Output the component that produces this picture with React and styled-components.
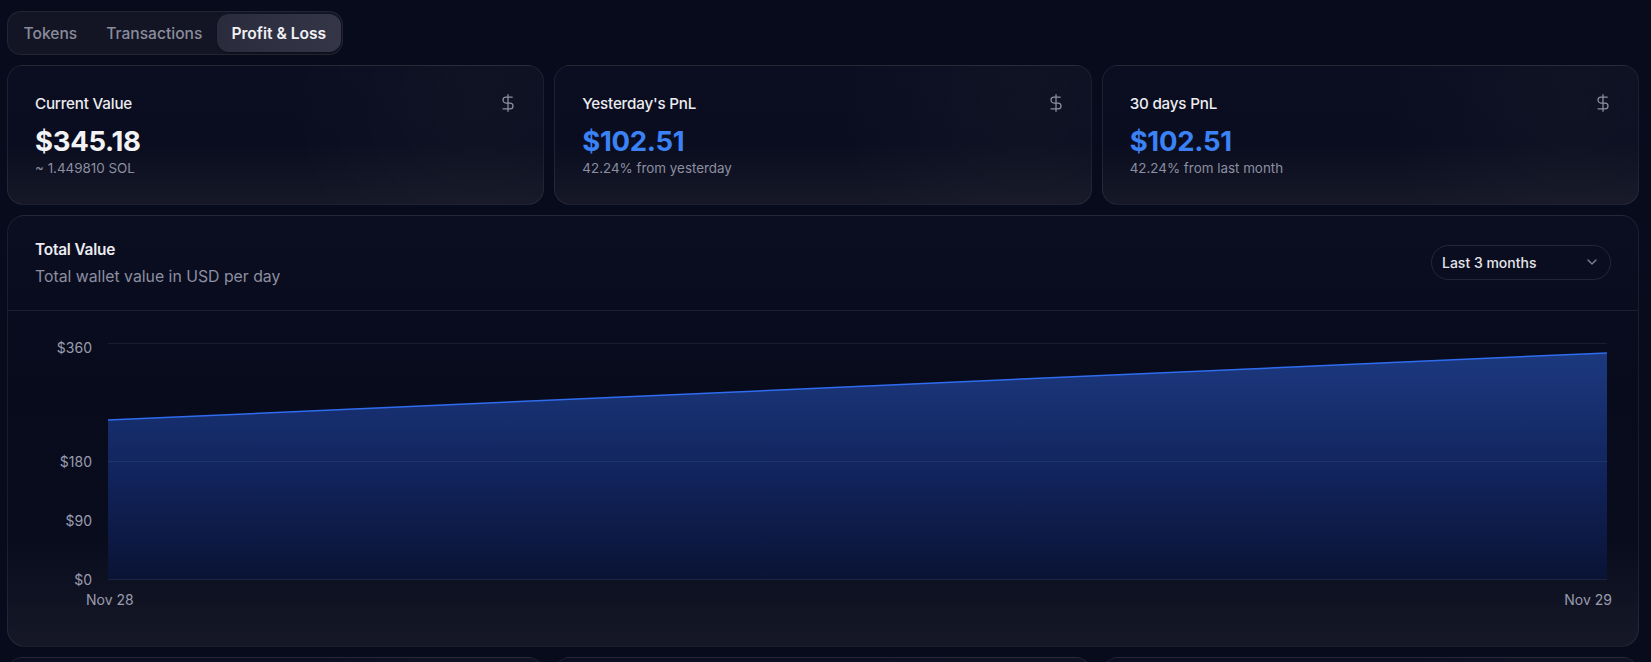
import React, { useState } from "react";
import styled, { createGlobalStyle } from "styled-components";
import { DollarSign, ChevronDown } from "lucide-react";

//global page styles
const GlobalStyle = createGlobalStyle`
    * { box-sizing: border-box; }
    body {
        margin: 0;
        background: #080b1b;
        font-family: Inter, "Noto Sans", "Liberation Sans", sans-serif;
        color: #ececf1;
    }
`

//chart data (value at first and last day)
const PLOT_HEIGHT = 237;
const MAX = 360;
const points = [243, 345];
const yTicks = [
    { label: "$360", top: 5 },
    { label: "$180", top: 118.5 },
    { label: "$90", top: 178 },
    { label: "$0", top: 237 },
];

const toY = v => PLOT_HEIGHT * (1 - v / MAX);

const statCards = [
    { title: "Current Value", value: "$345.18", sub: "~ 1.449810 SOL", accent: false },
    { title: "Yesterday's PnL", value: "$102.51", sub: "42.24% from yesterday", accent: true },
    { title: "30 days PnL", value: "$102.51", sub: "42.24% from last month", accent: true },
];

const tabs = ["Tokens", "Transactions", "Profit & Loss"];

const StatCard = ({ title, value, sub, accent }) => (
    <Card>
        <CardTop>
            <CardTitle>{title}</CardTitle>
            <IconWrap><DollarSign size={20} strokeWidth={1.5} /></IconWrap>
        </CardTop>
        <Value $accent={accent}>{value}</Value>
        <Sub>{sub}</Sub>
    </Card>
)

const App = () => {
    const [active, setActive] = useState("Profit & Loss");

    const linePath = `M0 ${toY(points[0])} L1000 ${toY(points[1])}`;
    const areaPath = `${linePath} L1000 ${PLOT_HEIGHT} L0 ${PLOT_HEIGHT} Z`;

    return (
        <Page>
            <GlobalStyle />
            <TabList>
                {tabs.map(t => (
                    <Tab key={t} $active={active === t} onClick={() => setActive(t)}>{t}</Tab>
                ))}
            </TabList>

            <CardRow>
                {statCards.map(c => <StatCard key={c.title} {...c} />)}
            </CardRow>

            <ChartCard>
                <ChartHeader>
                    <div>
                        <ChartTitle>Total Value</ChartTitle>
                        <ChartSub>Total wallet value in USD per day</ChartSub>
                    </div>
                    <Select>
                        <span>Last 3 months</span>
                        <ChevronDown size={16} strokeWidth={2} />
                    </Select>
                </ChartHeader>
                <ChartBody>
                    <YAxis>
                        {yTicks.map(t => (
                            <YLabel key={t.label} style={{ top: t.top }}>{t.label}</YLabel>
                        ))}
                    </YAxis>
                    <Plot>
                        <svg width="100%" height={PLOT_HEIGHT} viewBox={`0 0 1000 ${PLOT_HEIGHT}`} preserveAspectRatio="none">
                            <defs>
                                <linearGradient id="fillValue" x1="0" y1="0" x2="0" y2="1">
                                    <stop offset="0%" stopColor="#1c397f" />
                                    <stop offset="55%" stopColor="#11235b" />
                                    <stop offset="100%" stopColor="#0a1334" />
                                </linearGradient>
                            </defs>
                            <line x1="0" x2="1000" y1="0.5" y2="0.5" stroke="#1a1d30" vectorEffect="non-scaling-stroke" />
                            <path d={areaPath} fill="url(#fillValue)" />
                            <line x1="0" x2="1000" y1="118.5" y2="118.5" stroke="#24386e" strokeOpacity="0.8" vectorEffect="non-scaling-stroke" />
                            <line x1="0" x2="1000" y1={PLOT_HEIGHT - 0.5} y2={PLOT_HEIGHT - 0.5} stroke="#1c2444" vectorEffect="non-scaling-stroke" />
                            <path d={linePath} fill="none" stroke="#2f6cf0" strokeWidth="1.5" vectorEffect="non-scaling-stroke" />
                        </svg>
                    </Plot>
                    <XAxis>
                        <XLabel $shift="-22px">Nov 28</XLabel>
                        <XLabel $shift="5px" $end>Nov 29</XLabel>
                    </XAxis>
                </ChartBody>
            </ChartCard>

            {/* next row of cards, below the fold */}
            <CardRow>
                <Card />
                <Card />
                <Card />
            </CardRow>
        </Page>
    )
}

const Page = styled.div`
    padding: 11px 12px 0 7px;
    display: flex;
    flex-direction: column;
    align-items: flex-start;
    gap: 10px;
`
const TabList = styled.div`
    display: flex;
    padding: 2px 1px;
    border: 1px solid rgba(255, 255, 255, 0.07);
    border-radius: 14px;
    background: #131524;
`
const Tab = styled.button`
    height: 38px;
    padding: 0 14.5px;
    border: none;
    border-radius: 12px;
    font-family: inherit;
    font-size: 15.6px;
    font-weight: ${p => (p.$active ? 600 : 500)};
    color: ${p => (p.$active ? "#f1f1f5" : "#8a8c9c")};
    background: ${p => (p.$active ? "linear-gradient(90deg, #2a2c3e, #343647)" : "transparent")};
    box-shadow: ${p => (p.$active ? "0 1px 2px rgba(0,0,0,0.4)" : "none")};
    cursor: pointer;
`
const CardRow = styled.div`
    align-self: stretch;
    display: grid;
    grid-template-columns: repeat(3, 1fr);
    gap: 10px;
`
const Card = styled.div`
    height: 140px;
    padding: 27px 25px 27px 27px;
    border: 1px solid rgba(255, 255, 255, 0.07);
    border-radius: 16px;
    background:
        radial-gradient(circle at 88% 30%, rgba(255, 255, 255, 0.025), transparent 40%),
        linear-gradient(180deg, #0b0e20 0%, #0a0d1f 55%, #161827 100%);
`
const CardTop = styled.div`
    display: flex;
    align-items: center;
    justify-content: space-between;
    height: 20px;
`
const CardTitle = styled.div`
    font-size: 15.2px;
    font-weight: 500;
    letter-spacing: -0.2px;
    color: #ececf1;
`
const IconWrap = styled.div`
    display: flex;
    color: #8d90a0;
`
const Value = styled.div`
    margin-top: 12px;
    font-size: 27.5px;
    line-height: 32px;
    font-weight: 700;
    letter-spacing: -0.3px;
    color: ${p => (p.$accent ? "#3b82f6" : "#f3f3f6")};
`
const Sub = styled.div`
    margin-top: 2px;
    font-size: 13.4px;
    line-height: 18px;
    color: #8c8fa0;
`
const ChartCard = styled.div`
    align-self: stretch;
    border: 1px solid rgba(255, 255, 255, 0.07);
    border-radius: 18px;
    background: linear-gradient(180deg, #0b0e20 0%, #080b1c 40%, #090c1d 75%, #161827 100%);
    overflow: hidden;
`
const ChartHeader = styled.div`
    display: flex;
    align-items: center;
    justify-content: space-between;
    padding: 24px 27px 23px 27px;
    border-bottom: 1px solid rgba(255, 255, 255, 0.08);
`
const ChartTitle = styled.div`
    font-size: 15.4px;
    line-height: 20px;
    font-weight: 600;
    letter-spacing: -0.2px;
    color: #ececf1;
`
const ChartSub = styled.div`
    margin-top: 7px;
    font-size: 15.8px;
    line-height: 20px;
    color: #8c8fa0;
`
const Select = styled.div`
    width: 180px;
    height: 35px;
    margin-bottom: 3px;
    padding: 0 10px 0 10px;
    display: flex;
    align-items: center;
    justify-content: space-between;
    border: 1px solid rgba(255, 255, 255, 0.1);
    border-radius: 999px;
    font-size: 14px;
    font-weight: 500;
    color: #e4e5ea;
    svg { color: #7f8294; }
`
const ChartBody = styled.div`
    display: grid;
    grid-template-columns: 100px 1fr;
    padding: 32px 31px 37px 0;
`
const YAxis = styled.div`
    position: relative;
    height: ${PLOT_HEIGHT}px;
`
const YLabel = styled.span`
    position: absolute;
    right: 16px;
    transform: translateY(-50%);
    font-size: 14px;
    line-height: 18px;
    color: #9a9caf;
`
const Plot = styled.div`
    height: ${PLOT_HEIGHT}px;
    svg { display: block; }
`
const XAxis = styled.div`
    grid-column: 2;
    display: flex;
    justify-content: space-between;
    margin-top: 11px;
`
const XLabel = styled.span`
    font-size: 14px;
    line-height: 18px;
    color: #9a9caf;
    margin-left: ${p => (p.$end ? "0" : p.$shift)};
    margin-right: ${p => (p.$end ? `-${p.$shift}` : "0")};
`

export default App;
